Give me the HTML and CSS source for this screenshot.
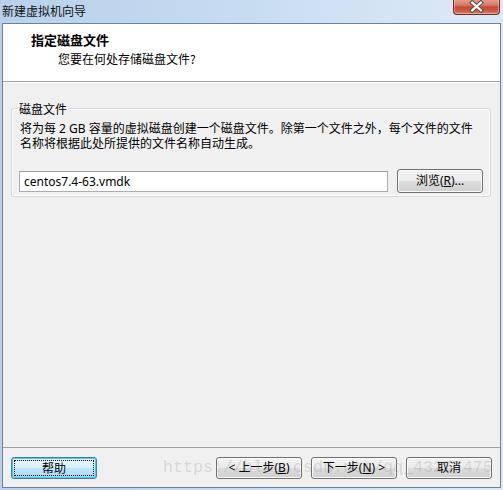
FILE: index.html
```html
<!DOCTYPE html>
<html lang="zh-CN">
<head>
<meta charset="utf-8">
<title>新建虚拟机向导</title>
<link rel="stylesheet" href="styles.css">
</head>
<body>
<div class="window">
  <div class="titlebar">
    <span class="title">新建虚拟机向导</span>
    <div class="close">
      <svg width="46" height="15" viewBox="0 0 46 15" aria-hidden="true">
        <path d="M18.5 3.5 L27.5 11.5 M27.5 3.5 L18.5 11.5" stroke="#4a4a4a" stroke-width="4.2" stroke-linecap="square" fill="none"/>
        <path d="M18.5 3.5 L27.5 11.5 M27.5 3.5 L18.5 11.5" stroke="#ffffff" stroke-width="2.2" stroke-linecap="square" fill="none"/>
      </svg>
    </div>
  </div>
  <div class="client">
    <div class="header">
      <div class="h-title">指定磁盘文件</div>
      <div class="h-sub">您要在何处存储磁盘文件?</div>
    </div>
    <div class="body">
      <fieldset class="group">
        <legend class="legend">磁盘文件</legend>
        <p class="desc">将为每 2 GB 容量的虚拟磁盘创建一个磁盘文件。除第一个文件之外，每个文件的文件名称将根据此处所提供的文件名称自动生成。</p>
        <div class="row">
          <div class="input">centos7.4-63.vmdk</div>
          <button class="btn browse">浏览(<u>R</u>)...</button>
        </div>
      </fieldset>
    </div>
    <div class="footer">
      <button class="btn default"><span class="focus">帮助</span></button>
      <div class="spacer"></div>
      <button class="btn">&lt; 上一步(<u>B</u>)</button>
      <button class="btn">下一步(<u>N</u>) &gt;</button>
      <button class="btn">取消</button>
    </div>
  </div>
  <div class="watermark">https://blog.csdn.net/qq_43257475</div>
</div>
</body>
</html>
```
FILE: styles.css
```css
* { box-sizing: border-box; }
html, body { margin: 0; padding: 0; }
body {
  width: 503px;
  height: 490px;
  overflow: hidden;
  font-family: "Noto Sans", "Noto Sans CJK SC", sans-serif;
  font-size: 12px;
  color: #000;
}
.window {
  position: relative;
  width: 503px;
  height: 490px;
  background: linear-gradient(to right, #b8d0ea 0%, #c6dbf1 45%, #d6e5f5 80%, #dbe8f6 100%);
  display: flex;
  flex-direction: column;
}
.titlebar {
  height: 23px;
  display: flex;
  justify-content: space-between;
  align-items: flex-start;
  padding: 0 3px 0 2px;
}
.title {
  font-family: "Noto Sans CJK SC", sans-serif;
  font-size: 12px;
  line-height: 15px;
  margin-top: 3px;
  color: #111;
}
.close {
  width: 47px;
  height: 16px;
  margin-top: -1px;
  border: 1px solid #6b2d22;
  border-top: none;
  border-radius: 0 0 4px 4px;
  background: linear-gradient(#e8a193 0%, #d77a66 40%, #c54a31 55%, #cc5a42 80%, #dc8570 100%);
  box-shadow: inset 0 0 0 1px rgba(255,220,210,0.45);
  display: flex;
  justify-content: center;
  align-items: center;
  overflow: hidden;
}
.close svg { display: block; }
.client {
  margin: 0 2px;
  height: 465px;
  border: 1px solid #6f8196;
  background: #f0f0f0;
  display: flex;
  flex-direction: column;
}
.header {
  height: 58px;
  background: #fff;
  border-bottom: 1px solid #a0a0a0;
  padding: 8px 0 0 28px;
  font-family: "Noto Sans CJK SC", sans-serif;
}
.h-title {
  font-weight: bold;
  font-size: 13px;
  line-height: 15px;
}
.h-sub {
  margin-top: 4px;
  padding-left: 27px;
  line-height: 15px;
}
.body {
  flex: 1;
  padding: 18px 9px 0 8px;
  border-top: 1px solid #fff;
}
.group {
  margin: 0;
  padding: 0 7px 3px 7px;
  border: 1px solid #d5d9dd;
  border-radius: 3px;
  box-shadow: inset 0 0 0 1px #fff;
  min-width: 0;
}
.legend {
  padding: 0 1px;
  margin-left: -1px;
  line-height: 15px;
  font-family: "Noto Sans CJK SC", sans-serif;
}
.desc {
  margin: 5px 0 0 1px;
  line-height: 15px;
  font-family: "Noto Sans", "Noto Sans CJK SC", sans-serif;
}
.row {
  display: flex;
  align-items: center;
  gap: 9px;
  margin-top: 18px;
}
.input {
  width: 370px;
  height: 21px;
  background: #fff;
  border: 1px solid #abadb3;
  border-top-color: #9c9fa6;
  padding: 0 4px;
  line-height: 19px;
  font-family: "Noto Sans", sans-serif;
  font-size: 12px;
}
.btn {
  width: 86px;
  height: 22px;
  padding: 0;
  border: 1px solid #707070;
  border-radius: 3px;
  background: linear-gradient(#f2f2f2 0%, #ebebeb 48%, #dddddd 52%, #cfcfcf 100%);
  box-shadow: inset 0 0 0 1px #fbfbfb;
  font-family: "Noto Sans", "Noto Sans CJK SC", sans-serif;
  font-size: 12px;
  color: #000;
  line-height: 18px;
}
.btn u { text-decoration: underline; }
.browse { height: 24px; }
.footer {
  height: 40px;
  border-top: 1px solid #a0a0a0;
  padding: 9px 8px 0 8px;
  display: flex;
  align-items: flex-start;
  gap: 9px;
}
.spacer { flex: 1; }
.btn.default {
  border-color: #3c7fb1;
  background: linear-gradient(#eaf6fd 0%, #d9f0fc 48%, #bee6fd 52%, #a7d9f5 100%);
  box-shadow: inset 0 0 0 1px #48c6f5;
  padding: 2px;
}
.focus {
  display: block;
  height: 16px;
  line-height: 15px;
  border: 1px dotted #000;
}
.watermark {
  position: absolute;
  left: 163px;
  top: 458px;
  font-family: "Liberation Mono", monospace;
  font-size: 16.67px;
  line-height: 20px;
  color: rgba(120,120,120,0.22);
  white-space: nowrap;
  pointer-events: none;
}
```
